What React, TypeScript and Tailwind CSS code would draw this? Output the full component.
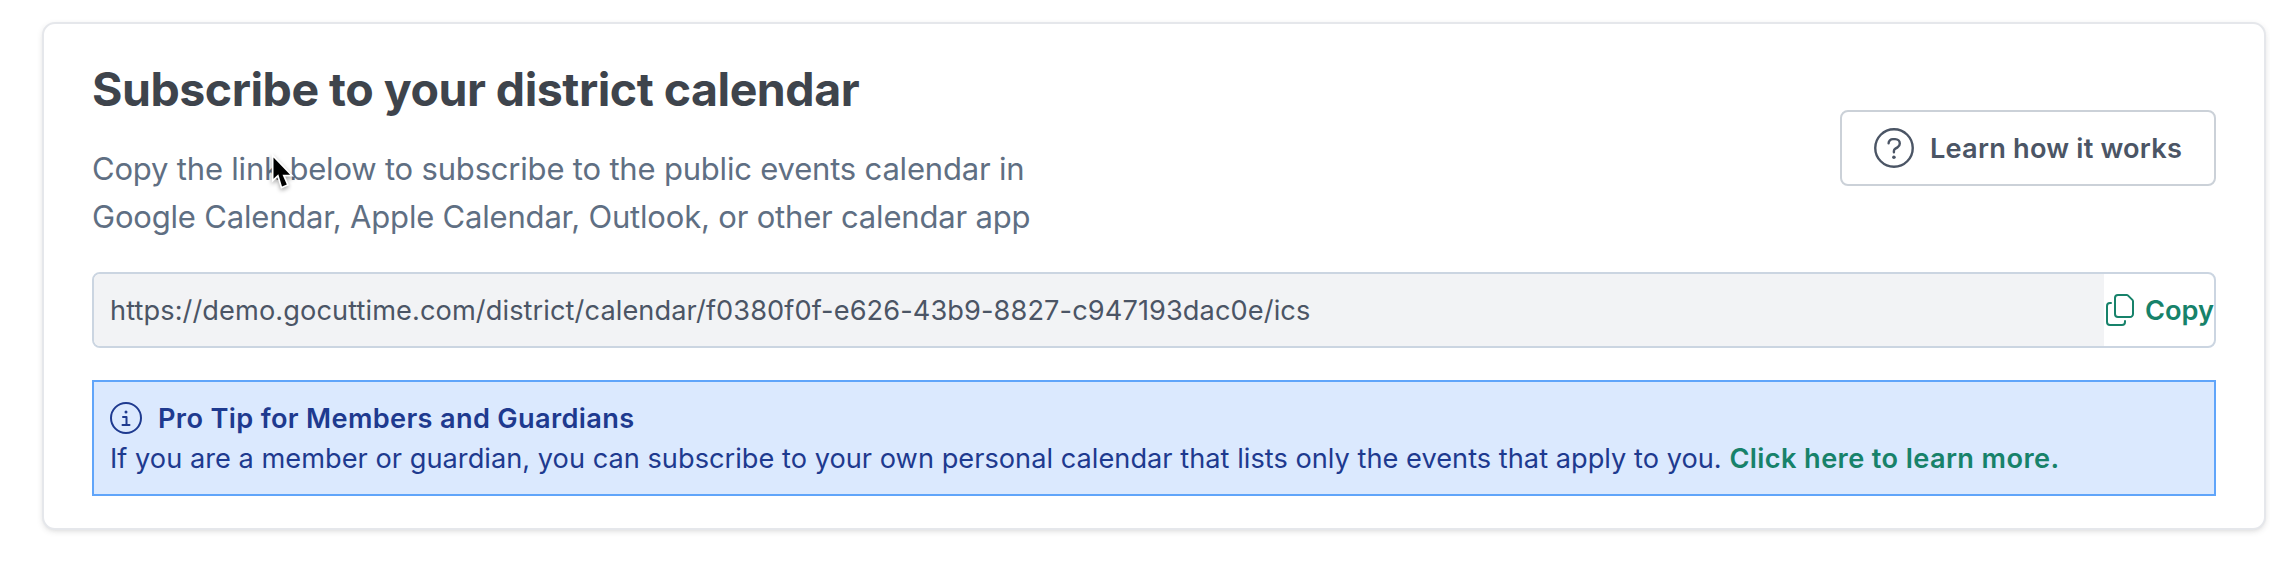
function QuestionIcon() {
  return (
    <svg className="size-10 shrink-0" viewBox="0 0 40 40" fill="none" stroke="currentColor" strokeWidth="2.4">
      <circle cx="20" cy="20" r="18.75" />
      <path
        d="M14.6 15.3c0-2.5 1.9-4.2 4.3-4.2h2.3c2.6 0 4.6 2 4.6 4.5 0 1.7-.9 3-2.3 3.8l-2.1 1.2c-1 .6-1.5 1.3-1.5 2.4v1.3"
        strokeLinecap="round"
        strokeLinejoin="round"
      />
      <circle cx="19.9" cy="29.3" r="1.8" fill="currentColor" stroke="none" />
    </svg>
  );
}

function InfoIcon() {
  return (
    <svg className="size-8 shrink-0" viewBox="0 0 32 32" fill="none" stroke="currentColor" strokeWidth="2">
      <circle cx="16" cy="16" r="15" />
      <path d="M13 15h3.5v8M12.5 23h7" strokeLinecap="round" strokeLinejoin="round" />
      <circle cx="16" cy="10" r="1.5" fill="currentColor" stroke="none" />
    </svg>
  );
}

function CopyIcon() {
  return (
    <svg
      className="h-8 w-7 shrink-0"
      viewBox="0 0 28 32"
      fill="none"
      stroke="currentColor"
      strokeWidth="2"
      strokeLinecap="round"
      strokeLinejoin="round"
    >
      <path d="M12 1h8.6c.6 0 1.1.2 1.500.6l4.300 4.300c.4.400.6.900.6 1.500V20a3 3 0 0 1-3 3H12a3 3 0 0 1-3-3V4a3 3 0 0 1 3-3z" />
      <path d="M5 9H4a3 3 0 0 0-3 3v16a3 3 0 0 0 3 3h12a3 3 0 0 0 3-3v-1" />
    </svg>
  );
}

function Pointer() {
  return (
    <svg
      className="absolute top-[152px] left-[268px] h-10 w-7 drop-shadow-[0_2px_2px_rgba(0,0,0,0.35)]"
      viewBox="0 0 28 40"
    >
      <path
        d="M5.5 5.5v21.3l4.800-4.500 3.700 12.100 4.800-2-4.300-9.600h7.600z"
        fill="#000"
        stroke="#fff"
        strokeWidth="3.4"
        paintOrder="stroke"
      />
    </svg>
  );
}

export default function App() {
  return (
    <div className="relative h-[564px] bg-white pt-[22px] pr-1 pl-[42px] font-[Inter,sans-serif]">
      <main className="h-[508px] rounded-[13px] border-2 border-[#e5e7eb] bg-white px-12 pt-[37px] shadow-[0_2px_6px_rgba(0,0,0,0.09),0_2px_4px_-2px_rgba(0,0,0,0.08)]">
        <header className="flex h-[211px] items-start justify-between">
          <div className="whitespace-nowrap">
            <h1 className="text-[46.5px] leading-14 font-bold tracking-[-0.49px] text-[#3e444c]">
              Subscribe to your district calendar
            </h1>
            <p className="mt-7 text-[31px] leading-12 tracking-[-0.19px] text-[#5f6f83]">
              Copy the link below to subscribe to the public events calendar in
              <br />
              Google Calendar, Apple Calendar, Outlook, or other calendar app
            </p>
          </div>
          <button className="mt-[49px] flex h-[76px] w-[376px] items-center gap-4 rounded-lg border-2 border-[#cbd1d8] bg-white pl-8 text-[27.2px] font-semibold tracking-[0.2px] whitespace-nowrap text-[#4b5565]">
            <QuestionIcon />
            <span className="pt-0.5">Learn how it works</span>
          </button>
        </header>

        <div className="flex h-[76px] overflow-hidden rounded-lg border-2 border-[#cbd5e1] bg-white">
          <div className="flex flex-1 items-center bg-[#f2f3f5] pt-0.5 pl-4 text-[27.2px] tracking-[0.09px] whitespace-nowrap text-[#4b5565]">
            https://demo.gocuttime.com/district/calendar/f0380f0f-e626-43b9-8827-c947193dac0e/ics
          </div>
          <button className="flex w-[110px] items-center gap-2.5 pl-0.5 text-[27.2px] font-semibold text-[#17826a]">
            <CopyIcon />
            <span className="pt-0.5 pl-px">Copy</span>
          </button>
        </div>

        <section className="mt-8 h-[116px] border-2 border-[#60a5fa] bg-[#dbe9fe] px-4 pt-4 text-[27.2px] leading-10 whitespace-nowrap text-[#1e3a8f]">
          <h2 className="flex h-10 items-center gap-4 font-semibold tracking-[0.33px]">
            <InfoIcon />
            <span className="pt-0.5">Pro Tip for Members and Guardians</span>
          </h2>
          <p className="pt-px tracking-[0.02px]">
            If you are a member or guardian, you can subscribe to your own personal calendar that lists only the events that apply to you.{" "}
            <a className="font-semibold tracking-[0.38px] text-[#17826a]">Click here to learn more.</a>
          </p>
        </section>
      </main>
      <Pointer />
    </div>
  );
}
